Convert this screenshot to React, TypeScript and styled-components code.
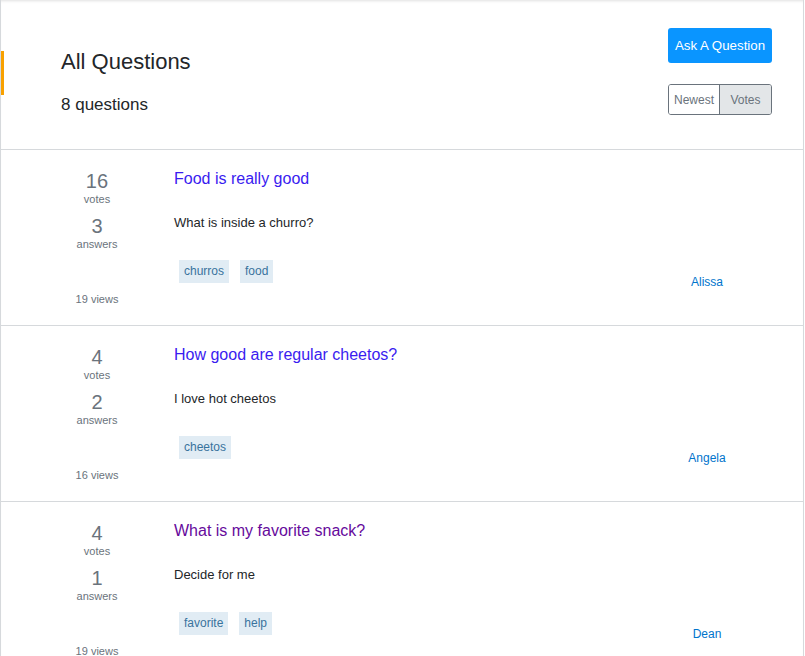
import React from "react";
import styled, { createGlobalStyle } from "styled-components";

const GlobalStyle = createGlobalStyle`
  html, body { margin: 0; padding: 0; background: #fff; }
  body { font-family: "Liberation Sans", Arial, Helvetica, sans-serif; color: #232629; }
  * { box-sizing: border-box; }
`;

const Page = styled.main`
  position: relative;
  width: 804px;
  min-height: 656px;
  border-left: 1px solid #d6d9dc;
  border-right: 1px solid #d6d9dc;
  box-shadow: inset 0 3px 3px -2px rgba(0, 0, 0, 0.12);
`;

const ActiveMarker = styled.span`
  position: absolute;
  left: 0;
  top: 51px;
  width: 3px;
  height: 44px;
  background: #f8a100;
`;

const Header = styled.header`
  display: flex;
  justify-content: space-between;
  padding: 28px 31px 34px 60px;
  border-bottom: 1px solid #d6d9dc;
`;

const HeaderLeft = styled.div`
  display: flex;
  flex-direction: column;
  gap: 20px;
  margin-top: 21px;
`;

const Title = styled.h1`
  margin: 0;
  font-size: 22px;
  line-height: 26px;
  font-weight: 400;
  color: #232629;
`;

const Count = styled.div`
  font-size: 17px;
  line-height: 20px;
  color: #232629;
`;

const HeaderRight = styled.div`
  display: flex;
  flex-direction: column;
  align-items: flex-end;
  gap: 21px;
`;

const AskButton = styled.button`
  height: 35px;
  width: 104px;
  padding: 0;
  border: none;
  border-radius: 3px;
  background: #0a95ff;
  color: #fff;
  font-family: inherit;
  font-size: 13.3px;
  cursor: pointer;
`;

const Toggle = styled.div`
  display: flex;
  border: 1px solid #6a737c;
  border-radius: 3px;
  overflow: hidden;
`;

const ToggleItem = styled.button<{ $active?: boolean }>`
  width: ${(p) => (p.$active ? "52px" : "50px")};
  height: 29px;
  padding: 0;
  border: none;
  border-left: ${(p) => (p.$active ? "1px solid #6a737c" : "none")};
  background: ${(p) => (p.$active ? "#e3e6e8" : "#fff")};
  color: #6a737c;
  font-family: inherit;
  font-size: 12px;
  cursor: pointer;
`;

const Row = styled.article`
  display: flex;
  height: 176px;
  padding: 19px 31px 0 60px;
  border-bottom: 1px solid #d6d9dc;
`;

const Stats = styled.div`
  width: 72px;
  display: flex;
  flex-direction: column;
  align-items: center;
  padding-top: 1px;
  padding-bottom: 19px;
`;

const StatGroup = styled.div`
  display: flex;
  flex-direction: column;
  align-items: center;
  & + & { margin-top: 9px; }
`;

const StatNumber = styled.span`
  font-size: 20px;
  line-height: 23px;
  color: #6a737c;
`;

const StatLabel = styled.span`
  font-size: 11px;
  line-height: 13px;
  color: #6a737c;
`;

const Views = styled.span`
  margin-top: auto;
  font-size: 11px;
  line-height: 13px;
  color: #6a737c;
`;

const Main = styled.div`
  flex: 1;
  margin-left: 41px;
  display: flex;
  flex-direction: column;
  align-items: flex-start;
`;

const QTitle = styled.a<{ $visited?: boolean }>`
  font-size: 16px;
  line-height: 20px;
  color: ${(p) => (p.$visited ? "#660a9c" : "#3a1cf0")};
  text-decoration: none;
`;

const Body = styled.p`
  margin: 26px 0 0;
  font-size: 13px;
  line-height: 16px;
  color: #232629;
`;

const Tags = styled.div`
  display: flex;
  gap: 11px;
  margin: 29px 0 0 5px;
`;

const Tag = styled.span`
  display: inline-block;
  padding: 4px 5px;
  font-size: 12px;
  line-height: 15px;
  background: #e1ecf4;
  color: #39739d;
`;

const Author = styled.div`
  width: 130px;
  padding-top: 106px;
  text-align: center;
  font-size: 12px;
  line-height: 15px;
  color: #0074cc;
`;

type Q = {
  votes: number;
  answers: number;
  views: number;
  title: string;
  body: string;
  tags: string[];
  author: string;
  visited?: boolean;
};

const questions: Q[] = [
  { votes: 16, answers: 3, views: 19, title: "Food is really good", body: "What is inside a churro?", tags: ["churros", "food"], author: "Alissa" },
  { votes: 4, answers: 2, views: 16, title: "How good are regular cheetos?", body: "I love hot cheetos", tags: ["cheetos"], author: "Angela" },
  { votes: 4, answers: 1, views: 19, title: "What is my favorite snack?", body: "Decide for me", tags: ["favorite", "help"], author: "Dean", visited: true },
];

export default function App() {
  return (
    <>
      <GlobalStyle />
      <Page>
        <ActiveMarker />
        <Header>
          <HeaderLeft>
            <Title>All Questions</Title>
            <Count>8 questions</Count>
          </HeaderLeft>
          <HeaderRight>
            <AskButton>Ask A Question</AskButton>
            <Toggle>
              <ToggleItem>Newest</ToggleItem>
              <ToggleItem $active>Votes</ToggleItem>
            </Toggle>
          </HeaderRight>
        </Header>
        {questions.map((q) => (
          <Row key={q.title}>
            <Stats>
              <StatGroup>
                <StatNumber>{q.votes}</StatNumber>
                <StatLabel>votes</StatLabel>
              </StatGroup>
              <StatGroup>
                <StatNumber>{q.answers}</StatNumber>
                <StatLabel>answers</StatLabel>
              </StatGroup>
              <Views>{q.views} views</Views>
            </Stats>
            <Main>
              <QTitle href="#" $visited={q.visited}>{q.title}</QTitle>
              <Body>{q.body}</Body>
              <Tags>
                {q.tags.map((t) => (
                  <Tag key={t}>{t}</Tag>
                ))}
              </Tags>
            </Main>
            <Author>{q.author}</Author>
          </Row>
        ))}
      </Page>
    </>
  );
}
